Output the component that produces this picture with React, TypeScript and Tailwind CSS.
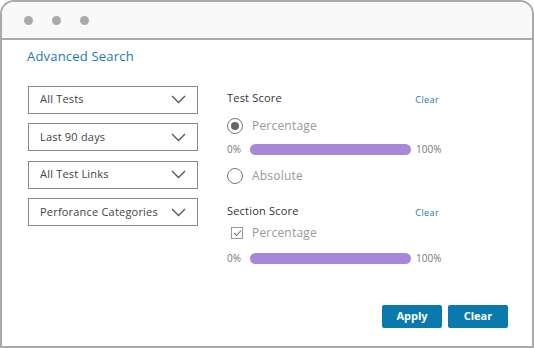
import React, { useState } from 'react';

const font = { fontFamily: '"Open Sans", "Noto Sans", sans-serif' };

const Chevron = () => (
  <svg width="15" height="9" viewBox="0 0 15 9" fill="none">
    <path d="M1 1L7.5 7.5L14 1" stroke="#555" strokeWidth="1.3" />
  </svg>
);

const Dropdown = ({ label }: { label: string }) => (
  <div className="flex h-[28px] items-center justify-between border border-[#8a8a8a] pl-[11px] pr-[11px]">
    <span className="text-[11px] tracking-[0.2px] text-[#444]">{label}</span>
    <Chevron />
  </div>
);

const Slider = () => (
  <div className="flex items-center">
    <span className="w-[23px] text-[10px] text-[#777]">0%</span>
    <div className="h-[11px] w-[161px] rounded-full bg-[#a687d9]" />
    <span className="ml-[5px] text-[10px] text-[#777]">100%</span>
  </div>
);

const Radio = ({ checked, label }: { checked?: boolean; label: string }) => (
  <div className="flex items-center">
    <div className="flex h-[16px] w-[16px] items-center justify-center rounded-full border border-[#777]">
      {checked && <div className="h-[8px] w-[8px] rounded-full bg-[#666]" />}
    </div>
    <span className="ml-[9px] text-[12px] tracking-[0.2px] text-[#999]">{label}</span>
  </div>
);

const SectionHeader = ({ title }: { title: string }) => (
  <div className="flex items-center justify-between pr-[4px]">
    <span className="text-[11px] tracking-[0.2px] text-[#333]">{title}</span>
    <button className="mt-[3px] text-[9px] tracking-[0.4px] text-[#1a7ab0]">Clear</button>
  </div>
);

export default function App() {
  const [filters] = useState(['All Tests', 'Last 90 days', 'All Test Links', 'Perforance Categories']);

  return (
    <div className="h-[348px] w-[534px] bg-white" style={font}>
      <div className="flex h-[348px] w-[534px] flex-col overflow-hidden rounded-t-[14px] border-2 border-[#aaaaaa] bg-white">
        <div className="flex h-[38px] items-center gap-[19px] border-b-2 border-[#aaaaaa] bg-[#f9f9f9] pl-[22px]">
          <div className="h-[9px] w-[9px] rounded-full bg-[#aaaaaa]" />
          <div className="h-[9px] w-[9px] rounded-full bg-[#aaaaaa]" />
          <div className="h-[9px] w-[9px] rounded-full bg-[#aaaaaa]" />
        </div>

        <div className="flex flex-1 flex-col pl-[25px] pr-[24px]">
          <h1 className="mt-[7px] text-[13px] tracking-[0.2px] text-[#1a7ab0]">Advanced Search</h1>

          <div className="mt-[19px] flex">
            <div className="ml-[1px] flex w-[170px] flex-col gap-[9.5px]">
              {filters.map(f => (
                <Dropdown key={f} label={f} />
              ))}
            </div>

            <div className="ml-[29px] mt-[4px] flex w-[216px] flex-col">
              <SectionHeader title="Test Score" />
              <div className="mt-[11px]">
                <Radio checked label="Percentage" />
              </div>
              <div className="mt-[7px]">
                <Slider />
              </div>
              <div className="mt-[10px]">
                <Radio label="Absolute" />
              </div>

              <div className="mt-[18px]">
                <SectionHeader title="Section Score" />
              </div>
              <div className="mt-[4px] flex items-center">
                <div className="ml-[4px] flex h-[12px] w-[12px] items-center justify-center border border-[#999]">
                  <svg width="9" height="8" viewBox="0 0 9 8" fill="none">
                    <path d="M1 4L3.5 6.5L8 1.5" stroke="#777" strokeWidth="1.1" />
                  </svg>
                </div>
                <span className="ml-[9px] text-[12px] tracking-[0.2px] text-[#999]">Percentage</span>
              </div>
              <div className="mt-[9px]">
                <Slider />
              </div>
            </div>
          </div>

          <div className="mt-auto mb-[18px] flex justify-end gap-[6px]">
            <button className="h-[23px] w-[60px] rounded-[2px] bg-[#0a7aad] text-[11px] font-bold text-white">Apply</button>
            <button className="h-[23px] w-[60px] rounded-[2px] bg-[#0a7aad] text-[11px] font-bold text-white">Clear</button>
          </div>
        </div>
      </div>
    </div>
  );
}
